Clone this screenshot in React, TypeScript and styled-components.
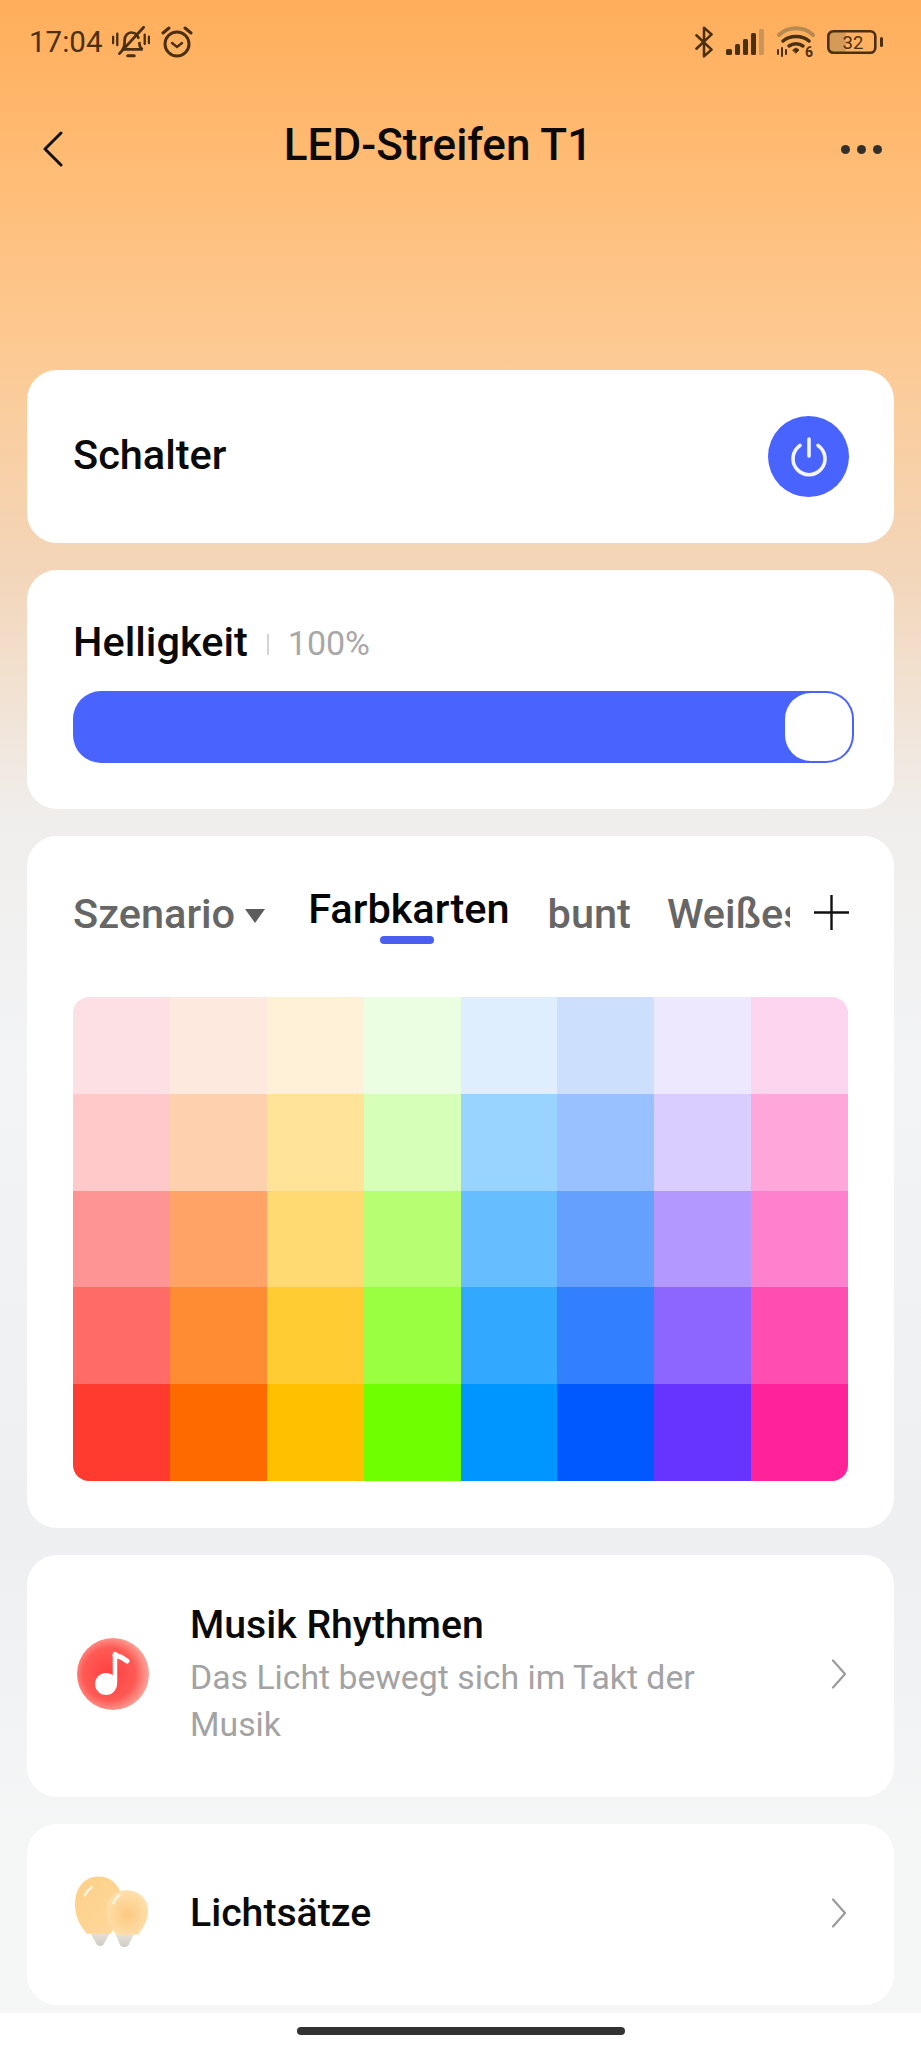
import React from 'react';
import styled, { createGlobalStyle } from 'styled-components';

const GlobalStyle = createGlobalStyle`
  html, body {
    margin: 0;
    padding: 0;
  }
  body {
    font-family: Roboto, "Noto Sans", sans-serif;
    background: #f5f6f8;
  }
`;

const Page = styled.div`
  width: 921px;
  height: 2048px;
  overflow: hidden;
  display: flex;
  flex-direction: column;
  background: linear-gradient(
    180deg,
    #ffae5a 0%,
    #ffbf7b 10%,
    #fccb96 18%,
    #f3d6ba 28%,
    #f0eeec 40%,
    #f3f4f6 52%,
    #eeeff1 75%,
    #f5f6f6 90%
  );
`;

const StatusBar = styled.div`
  height: 84px;
  padding: 0 37px 0 29px;
  display: flex;
  align-items: center;
  justify-content: space-between;
  color: #4a2f10;
  box-sizing: border-box;
`;

const StatusGroup = styled.div<{ $gap: number }>`
  display: flex;
  align-items: center;
  gap: ${p => p.$gap}px;
`;

const Clock = styled.span`
  font-size: 29.5px;
`;

const NavBar = styled.div`
  margin-top: 16px;
  height: 90px;
  padding: 0 39px 0 42px;
  display: flex;
  align-items: center;
  justify-content: space-between;
`;

const BackIcon = styled.svg`
  margin-top: 7px;
`;

const NavTitle = styled.h1`
  margin: 0 28px 0 0;
  font-size: 44px;
  font-weight: 500;
  color: #0c0a08;
  line-height: 1;
`;

const Dots = styled.div`
  margin-top: 8px;
  display: flex;
  gap: 7px;
`;

const Dot = styled.span`
  width: 9px;
  height: 9px;
  border-radius: 50%;
  background: #33302c;
`;

const Cards = styled.div`
  margin-top: 180px;
  padding: 0 27px;
  display: flex;
  flex-direction: column;
  gap: 27px;
`;

const Card = styled.section<{ $height: number }>`
  height: ${p => p.$height}px;
  box-sizing: border-box;
  background: #fff;
  border-radius: 30px;
`;

const SwitchCard = styled(Card)`
  display: flex;
  align-items: center;
  justify-content: space-between;
  padding: 0 45px 0 46px;
`;

const CardLabel = styled.span<{ $lift?: number }>`
  font-size: 41.5px;
  font-weight: 500;
  color: #0a0a0a;
  line-height: 1;
  margin-bottom: ${p => p.$lift ?? 0}px;
`;

const PowerButton = styled.div`
  width: 81px;
  height: 81px;
  border-radius: 50%;
  background: #4963ff;
  display: flex;
  align-items: center;
  justify-content: center;
`;

const BrightnessCard = styled(Card)`
  padding: 50px 40px 0 46px;
`;

const BrightnessHead = styled.div`
  display: flex;
  align-items: center;
  height: 44px;
`;

const Divider = styled.span`
  width: 2px;
  height: 21px;
  background: #d4d4d4;
  margin: 4px 19px 0 19px;
`;

const Percent = styled.span`
  font-size: 34px;
  color: #a8a8a8;
  margin-top: 2px;
`;

const Slider = styled.div`
  position: relative;
  margin-top: 27px;
  height: 72px;
  border-radius: 28px;
  background: #4963ff;
`;

const SliderThumb = styled.div`
  position: absolute;
  top: 2px;
  right: 2px;
  width: 67px;
  height: 68px;
  border-radius: 26px;
  background: #fff;
`;

const ColorCard = styled(Card)`
  padding: 54px 46px 0 46px;
`;

const Tabs = styled.div`
  height: 107px;
  display: flex;
  align-items: flex-start;
`;

const TabItem = styled.div<{ $active?: boolean; $left: number; $width?: number }>`
  position: relative;
  margin-left: ${p => p.$left}px;
  width: ${p => (p.$width ? `${p.$width}px` : 'auto')};
  overflow: hidden;
  flex-shrink: 0;
  white-space: nowrap;
  font-size: 41.5px;
  font-weight: 500;
  line-height: 48px;
  color: ${p => (p.$active ? '#050505' : '#666666')};
  margin-top: ${p => (p.$active ? '-5px' : '0')};
  height: ${p => (p.$active ? '59px' : '50px')};
`;

const TabMark = styled.span`
  position: absolute;
  left: 72px;
  bottom: 0;
  width: 54px;
  height: 8px;
  border-radius: 4px;
  background: #4a5ff0;
`;

const Caret = styled.span`
  width: 0;
  height: 0;
  margin: 19px 0 0 10px;
  border-left: 10.5px solid transparent;
  border-right: 10.5px solid transparent;
  border-top: 14px solid #5c5c5c;
`;

const PlusIcon = styled.div`
  margin: 5px 0 0 24px;
  flex-shrink: 0;
  display: flex;
`;

const Palette = styled.div`
  display: grid;
  grid-template-columns: repeat(8, 1fr);
  grid-auto-rows: 96.8px;
  border-radius: 16px;
  overflow: hidden;
`;

const Swatch = styled.div<{ $color: string }>`
  background: ${p => p.$color};
`;

const LinkCard = styled(Card)`
  display: flex;
  align-items: center;
  padding: 0 47px 4px 48px;
`;

const LinkIcon = styled.div`
  width: 75px;
  margin-right: 40px;
  flex-shrink: 0;
  display: flex;
  justify-content: center;
`;

const LinkBody = styled.div`
  flex: 1;
  min-width: 0;
`;

const LinkTitle = styled.div`
  font-size: 39.2px;
  font-weight: 500;
  color: #0a0a0a;
  line-height: 48px;
`;

const LinkText = styled.div`
  margin-top: 5px;
  width: 530px;
  font-size: 33.8px;
  color: #a3a3a3;
  line-height: 47px;
`;

const HomeBar = styled.div`
  margin-top: 8px;
  flex: 1;
  background: #fff;
  display: flex;
  justify-content: center;
  padding-top: 14px;
`;

const HomeHandle = styled.div`
  width: 328px;
  height: 8px;
  border-radius: 4px;
  background: #333;
`;

const palette = [
  ['#fde0e4', '#fde9de', '#fff0d8', '#ebfee2', '#deeefe', '#cce0fe', '#ede8fe', '#fdd5ee'],
  ['#ffc9c9', '#ffd0ae', '#ffe398', '#d6ffb8', '#99d4ff', '#99c1ff', '#d9ccff', '#ffa6db'],
  ['#ff9494', '#ffa366', '#ffda73', '#b7ff70', '#66bdff', '#66a0ff', '#b399ff', '#ff80cc'],
  ['#ff6b66', '#ff8b33', '#ffcc33', '#99ff40', '#33a8ff', '#3380ff', '#8c66ff', '#ff4db2'],
  ['#ff3b30', '#ff6a00', '#ffc000', '#6fff00', '#0096ff', '#0058ff', '#6633ff', '#ff2299'],
];

const BellOff = () => (
  <svg width="38" height="34" viewBox="0 0 36 32" fill="none" stroke="#4a2f10" strokeWidth="2.6" strokeLinecap="round">
    <path d="M10 23c2-2 2-5 2-9 0-4 3-7 6-7 3 0 6 2 7 5M26 17c0 2 1 5 3 6H12" />
    <path d="M15 29h6" strokeWidth="3" />
    <path d="M7 27 30 2" />
    <path d="M1 11v6M5 8v11M31 9v9M35 11v6" strokeWidth="2.2" />
  </svg>
);

const Alarm = () => (
  <svg width="34" height="32" viewBox="0 0 34 32" fill="none" stroke="#4a2f10" strokeWidth="3" strokeLinecap="round">
    <circle cx="17" cy="18" r="12" />
    <path d="M12 17l5 4 5-4" strokeWidth="2.4" />
    <path d="M3 7l6-5M31 7l-6-5" />
  </svg>
);

const Bluetooth = () => (
  <svg width="20" height="32" viewBox="0 0 22 38" fill="none" stroke="#4a2f10" strokeWidth="3" strokeLinejoin="round" strokeLinecap="round">
    <path d="M2 11l18 17-9 8V2l9 8L2 27" />
  </svg>
);

const Signal = () => (
  <svg width="39" height="26" viewBox="0 0 39 26">
    <rect x="0" y="20" width="6" height="6" rx="1.5" fill="#4a2f10" />
    <rect x="9" y="15" width="5" height="11" rx="1.5" fill="#4a2f10" />
    <rect x="17" y="10" width="5" height="16" rx="1.5" fill="#4a2f10" />
    <rect x="25" y="4" width="5" height="22" rx="1.5" fill="#4a2f10" />
    <rect x="33" y="0" width="5" height="26" rx="1.5" fill="#c8955c" />
  </svg>
);

const Wifi = () => (
  <svg width="38" height="32" viewBox="0 0 38 32" fill="none" strokeLinecap="round">
    <path d="M2 9C11 0 27 0 36 9" stroke="#b98a50" strokeWidth="4" />
    <path d="M6 15c7-6 19-6 26 0" stroke="#4a2f10" strokeWidth="3.5" />
    <path d="M12 20c4-3 10-3 14 0" stroke="#4a2f10" strokeWidth="3.5" />
    <path d="M16 24l3-2 3 2-3 3z" fill="#4a2f10" stroke="#4a2f10" strokeWidth="1" />
    <path d="M1 24v4M5 22v8M9 24v4" stroke="#4a2f10" strokeWidth="2" />
    <text x="28" y="31" fontSize="14" fontWeight="700" fill="#4a2f10" stroke="none" fontFamily="Roboto, sans-serif">6</text>
  </svg>
);

const Battery = () => (
  <svg width="57" height="24" viewBox="0 0 57 24" fill="none">
    <rect x="2" y="2" width="17" height="20" rx="3" fill="#d49a58" />
    <rect x="1.3" y="1.3" width="47" height="21.4" rx="5" stroke="#4a2f10" strokeWidth="2.6" />
    <text x="26" y="19" textAnchor="middle" fontSize="18.5" fill="#4a2f10" fontFamily="Roboto, sans-serif">32</text>
    <rect x="53" y="7" width="3" height="10" rx="1.5" fill="#4a2f10" />
  </svg>
);

const PowerGlyph = () => (
  <svg width="46" height="46" viewBox="0 0 46 46" fill="none" stroke="#f2f4ff" strokeWidth="3.6" strokeLinecap="round">
    <path d="M14 11.5a16 16 0 1 0 18 0" />
    <path d="M23 5v17" />
  </svg>
);

const PlusGlyph = () => (
  <svg width="35" height="35" viewBox="0 0 35 35" stroke="#111" strokeWidth="2.4">
    <path d="M0 17.5h35M17.5 0v35" />
  </svg>
);

const ChevronGlyph = () => (
  <svg width="16" height="30" viewBox="0 0 16 30" fill="none" stroke="#9b9b9b" strokeWidth="2.2" strokeLinecap="round" strokeLinejoin="round">
    <path d="M2 1.5 14 15 2 28.5" />
  </svg>
);

const MusicGlyph = () => (
  <svg width="72" height="72" viewBox="0 0 72 72">
    <defs>
      <radialGradient id="musicFill" cx="45%" cy="50%" r="52%">
        <stop offset="0%" stopColor="#ff3f3f" />
        <stop offset="70%" stopColor="#ff5a55" />
        <stop offset="100%" stopColor="#ff9a90" />
      </radialGradient>
    </defs>
    <circle cx="36" cy="36" r="36" fill="url(#musicFill)" />
    <path d="M38 16v29" stroke="#fff" strokeWidth="4.5" strokeLinecap="round" />
    <path d="M38 17c4 1 8 3 12 6" stroke="#fff" strokeWidth="5" strokeLinecap="round" fill="none" />
    <circle cx="29" cy="46" r="11" fill="#fff" />
  </svg>
);

const BulbsGlyph = () => (
  <svg width="76" height="74" viewBox="0 0 76 74">
    <defs>
      <linearGradient id="bulbBig" x1="0" y1="0" x2="1" y2="1">
        <stop offset="0%" stopColor="#fdd088" />
        <stop offset="100%" stopColor="#ffd89c" />
      </linearGradient>
      <radialGradient id="bulbSmall" cx="50%" cy="55%" r="55%">
        <stop offset="0%" stopColor="#fcc980" />
        <stop offset="100%" stopColor="#ffe0ad" />
      </radialGradient>
      <linearGradient id="bulbBase" x1="0" y1="0" x2="0" y2="1">
        <stop offset="0%" stopColor="#ece6da" />
        <stop offset="100%" stopColor="#cfcbc6" />
      </linearGradient>
    </defs>
    <path d="M14 54l8 15c2 2 5 2 7 0l8-15z" fill="url(#bulbBase)" />
    <path d="M0 28C0 11 10 0 24 0c14 0 24 11 24 28 0 12-5 22-12 30H12C5 50 0 41 0 28z" fill="url(#bulbBig)" />
    <path d="M40 56l6 14c2 2 6 2 8 0l7-14z" fill="url(#bulbBase)" />
    <path d="M32 35c0-13 8-21 20-21s22 8 22 21c0 10-5 17-10 24H42c-5-7-10-14-10-24z" fill="url(#bulbSmall)" />
    <path d="M10 19c2-4 4-6 7-8M39 27c1-3 3-6 6-8" stroke="#fff4e0" strokeWidth="2.5" strokeLinecap="round" fill="none" />
  </svg>
);

const App: React.FC = () => {
  return (
    <Page>
      <GlobalStyle />
      <StatusBar>
        <StatusGroup $gap={10}>
          <Clock>17:04</Clock>
          <BellOff />
          <Alarm />
        </StatusGroup>
        <StatusGroup $gap={12}>
          <Bluetooth />
          <Signal />
          <Wifi />
          <Battery />
        </StatusGroup>
      </StatusBar>
      <NavBar>
        <BackIcon width="21" height="36" viewBox="0 0 21 36" fill="none" stroke="#111" strokeWidth="3" strokeLinecap="round" strokeLinejoin="round">
          <path d="M19 2 3 18l16 16" />
        </BackIcon>
        <NavTitle>LED-Streifen T1</NavTitle>
        <Dots>
          <Dot />
          <Dot />
          <Dot />
        </Dots>
      </NavBar>
      <Cards>
        <SwitchCard $height={173}>
          <CardLabel $lift={4}>Schalter</CardLabel>
          <PowerButton>
            <PowerGlyph />
          </PowerButton>
        </SwitchCard>
        <BrightnessCard $height={239}>
          <BrightnessHead>
            <CardLabel>Helligkeit</CardLabel>
            <Divider />
            <Percent>100%</Percent>
          </BrightnessHead>
          <Slider>
            <SliderThumb />
          </Slider>
        </BrightnessCard>
        <ColorCard $height={692}>
          <Tabs>
            <TabItem $left={0}>Szenario</TabItem>
            <Caret />
            <TabItem $active $left={43}>
              Farbkarten
              <TabMark />
            </TabItem>
            <TabItem $left={38}>bunt</TabItem>
            <TabItem $left={36} $width={123}>Weißes</TabItem>
            <PlusIcon>
              <PlusGlyph />
            </PlusIcon>
          </Tabs>
          <Palette>
            {palette.flat().map((color, i) => (
              <Swatch key={i} $color={color} />
            ))}
          </Palette>
        </ColorCard>
        <LinkCard $height={242}>
          <LinkIcon>
            <MusicGlyph />
          </LinkIcon>
          <LinkBody>
            <LinkTitle>Musik Rhythmen</LinkTitle>
            <LinkText>Das Licht bewegt sich im Takt der Musik</LinkText>
          </LinkBody>
          <ChevronGlyph />
        </LinkCard>
        <LinkCard $height={181}>
          <LinkIcon>
            <BulbsGlyph />
          </LinkIcon>
          <LinkBody>
            <LinkTitle>Lichtsätze</LinkTitle>
          </LinkBody>
          <ChevronGlyph />
        </LinkCard>
      </Cards>
      <HomeBar>
        <HomeHandle />
      </HomeBar>
    </Page>
  );
};

export default App;
